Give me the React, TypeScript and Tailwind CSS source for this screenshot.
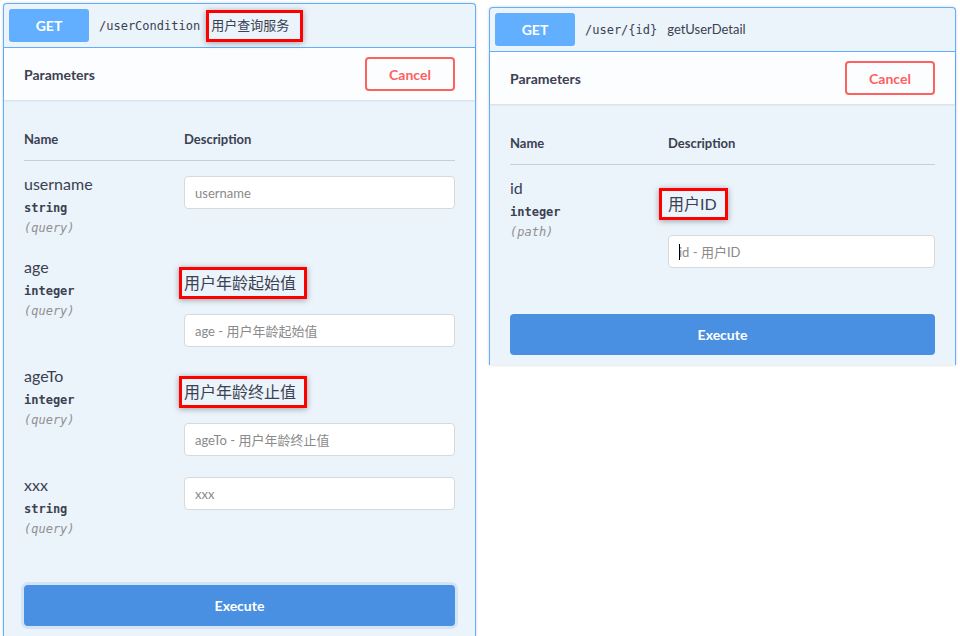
import React from 'react'

const sans = "font-['Lato','Noto_Sans_CJK_SC',sans-serif]"
const mono = "font-['DejaVu_Sans_Mono','Liberation_Mono',monospace]"

type Param = {
  name: string
  type: string
  where: string
  desc?: string
  boxClass?: string
  placeholder: string
  caret?: boolean
}

const leftParams: Param[] = [
  { name: 'username', type: 'string', where: '(query)', placeholder: 'username' },
  {
    name: 'age',
    type: 'integer',
    where: '(query)',
    desc: '用户年龄起始值',
    boxClass: '-ml-[5px] pl-[2px]',
    placeholder: 'age - 用户年龄起始值',
  },
  {
    name: 'ageTo',
    type: 'integer',
    where: '(query)',
    desc: '用户年龄终止值',
    boxClass: '-ml-[5px] pl-[2px]',
    placeholder: 'ageTo - 用户年龄终止值',
  },
  { name: 'xxx', type: 'string', where: '(query)', placeholder: 'xxx' },
]

const rightParams: Param[] = [
  {
    name: 'id',
    type: 'integer',
    where: '(path)',
    desc: '用户ID',
    boxClass: '-ml-[9px] pl-[6px]',
    placeholder: 'id - 用户ID',
    caret: true,
  },
]

function Highlight({ children, className }: { children: React.ReactNode; className?: string }) {
  return (
    <span
      className={
        'inline-flex items-center border-[3px] border-[#ff0000] shadow-[0_1px_6px_rgba(0,0,0,0.35)] ' +
        (className || '')
      }
    >
      {children}
    </span>
  )
}

function ParamRow({ p, first, nameWidth }: { p: Param; first: boolean; nameWidth: string }) {
  return (
    <div className={'flex pb-[8px] ' + (first ? 'pt-[11px]' : 'pt-[9px]')}>
      <div className={nameWidth + ' shrink-0'}>
        <div className="text-[16px] leading-[24px] text-[#3b4151]">{p.name}</div>
        <div className={mono + ' mt-[2px] text-[12px] leading-[20px] font-bold text-[#3b4151]'}>{p.type}</div>
        <div className={mono + ' text-[12px] leading-[20px] italic text-[#909090]'}>{p.where}</div>
      </div>
      <div className="flex-1 flex flex-col items-start">
        {p.desc ? (
          <Highlight
            className={
              'mt-[12px] pr-[8px] py-[3px] text-[16px] leading-[20px] text-[#3b4151] ' + (p.boxClass || '')
            }
          >
            {p.desc}
          </Highlight>
        ) : null}
        <div className={'relative w-full ' + (p.desc ? 'mt-[15px]' : 'mt-[4px]')}>
          <input
            readOnly
            placeholder={p.placeholder}
            className="w-full h-[33px] rounded-[4px] border border-[#d9d9d9] bg-white px-[10px] text-[13px] text-[#3b4151] placeholder:text-[#8a8a8a] outline-none"
          />
          {p.caret ? <span className="absolute left-[11px] top-[9px] h-[16px] w-px bg-black" /> : null}
        </div>
      </div>
    </div>
  )
}

function OpBlock({
  path,
  summary,
  params,
  width,
  nameWidth,
  glow,
}: {
  path: string
  summary: React.ReactNode
  params: Param[]
  width: string
  nameWidth: string
  glow?: boolean
}) {
  return (
    <div
      className={
        width +
        ' shrink-0 self-start rounded-t-[4px] border border-b-0 border-[#61affe] bg-[#ebf3fb] shadow-[0_0_3px_rgba(0,0,0,0.19)]'
      }
    >
      <div className="flex items-center px-[5px] py-[5px] border-b border-[#61affe]">
        <div className="w-[80px] h-[33px] rounded-[3px] bg-[#61affe] text-white text-[14px] font-bold flex items-center justify-center">
          GET
        </div>
        <span className={mono + ' ml-[10px] text-[12px] text-[#3b4151]'}>{path}</span>
        {summary}
      </div>

      <div className="h-[52px] px-[20px] flex items-center justify-between bg-white/80 shadow-[0_1px_2px_rgba(0,0,0,0.1)]">
        <span className="text-[14px] font-bold text-[#3b4151]">Parameters</span>
        <button className="w-[90px] h-[34px] rounded-[4px] border-2 border-[#ff6060] text-[14px] font-bold text-[#ff6060]">
          Cancel
        </button>
      </div>

      <div className="px-[20px] pt-[31px]">
        <div className="flex pb-[13px] border-b border-[#3b4151]/20 text-[13px] leading-[16px] font-bold text-[#3b4151]">
          <div className={nameWidth + ' shrink-0'}>Name</div>
          <div>Description</div>
        </div>
        {params.map((p, i) => (
          <ParamRow key={p.name} p={p} first={i === 0} nameWidth={nameWidth} />
        ))}
      </div>

      <div className="px-[20px] pt-[38px] pb-[10px]">
        <button
          className={
            'w-full h-[41px] rounded-[4px] bg-[#4990e2] text-white text-[14px] font-bold ' +
            (glow ? 'ring-[3px] ring-[#d3e4f7]' : '')
          }
        >
          Execute
        </button>
      </div>
    </div>
  )
}

export default function App() {
  return (
    <div className={sans + ' w-[960px] h-[636px] overflow-hidden bg-white flex'}>
      <div className="ml-[3px] mt-[3px]">
        <OpBlock
          width="w-[473px]"
          nameWidth="w-[160px]"
          path="/userCondition"
          glow
          summary={
            <Highlight className="ml-[6px] h-[32px] pl-[2px] pr-[11px] text-[13px] text-[#3b4151]">
              用户查询服务
            </Highlight>
          }
          params={leftParams}
        />
      </div>
      <div className="ml-[13px] mt-[7px]">
        <OpBlock
          width="w-[467px]"
          nameWidth="w-[158px]"
          path="/user/{id}"
          summary={<span className="ml-[10px] text-[13px] text-[#3b4151]">getUserDetail</span>}
          params={rightParams}
        />
      </div>
    </div>
  )
}
